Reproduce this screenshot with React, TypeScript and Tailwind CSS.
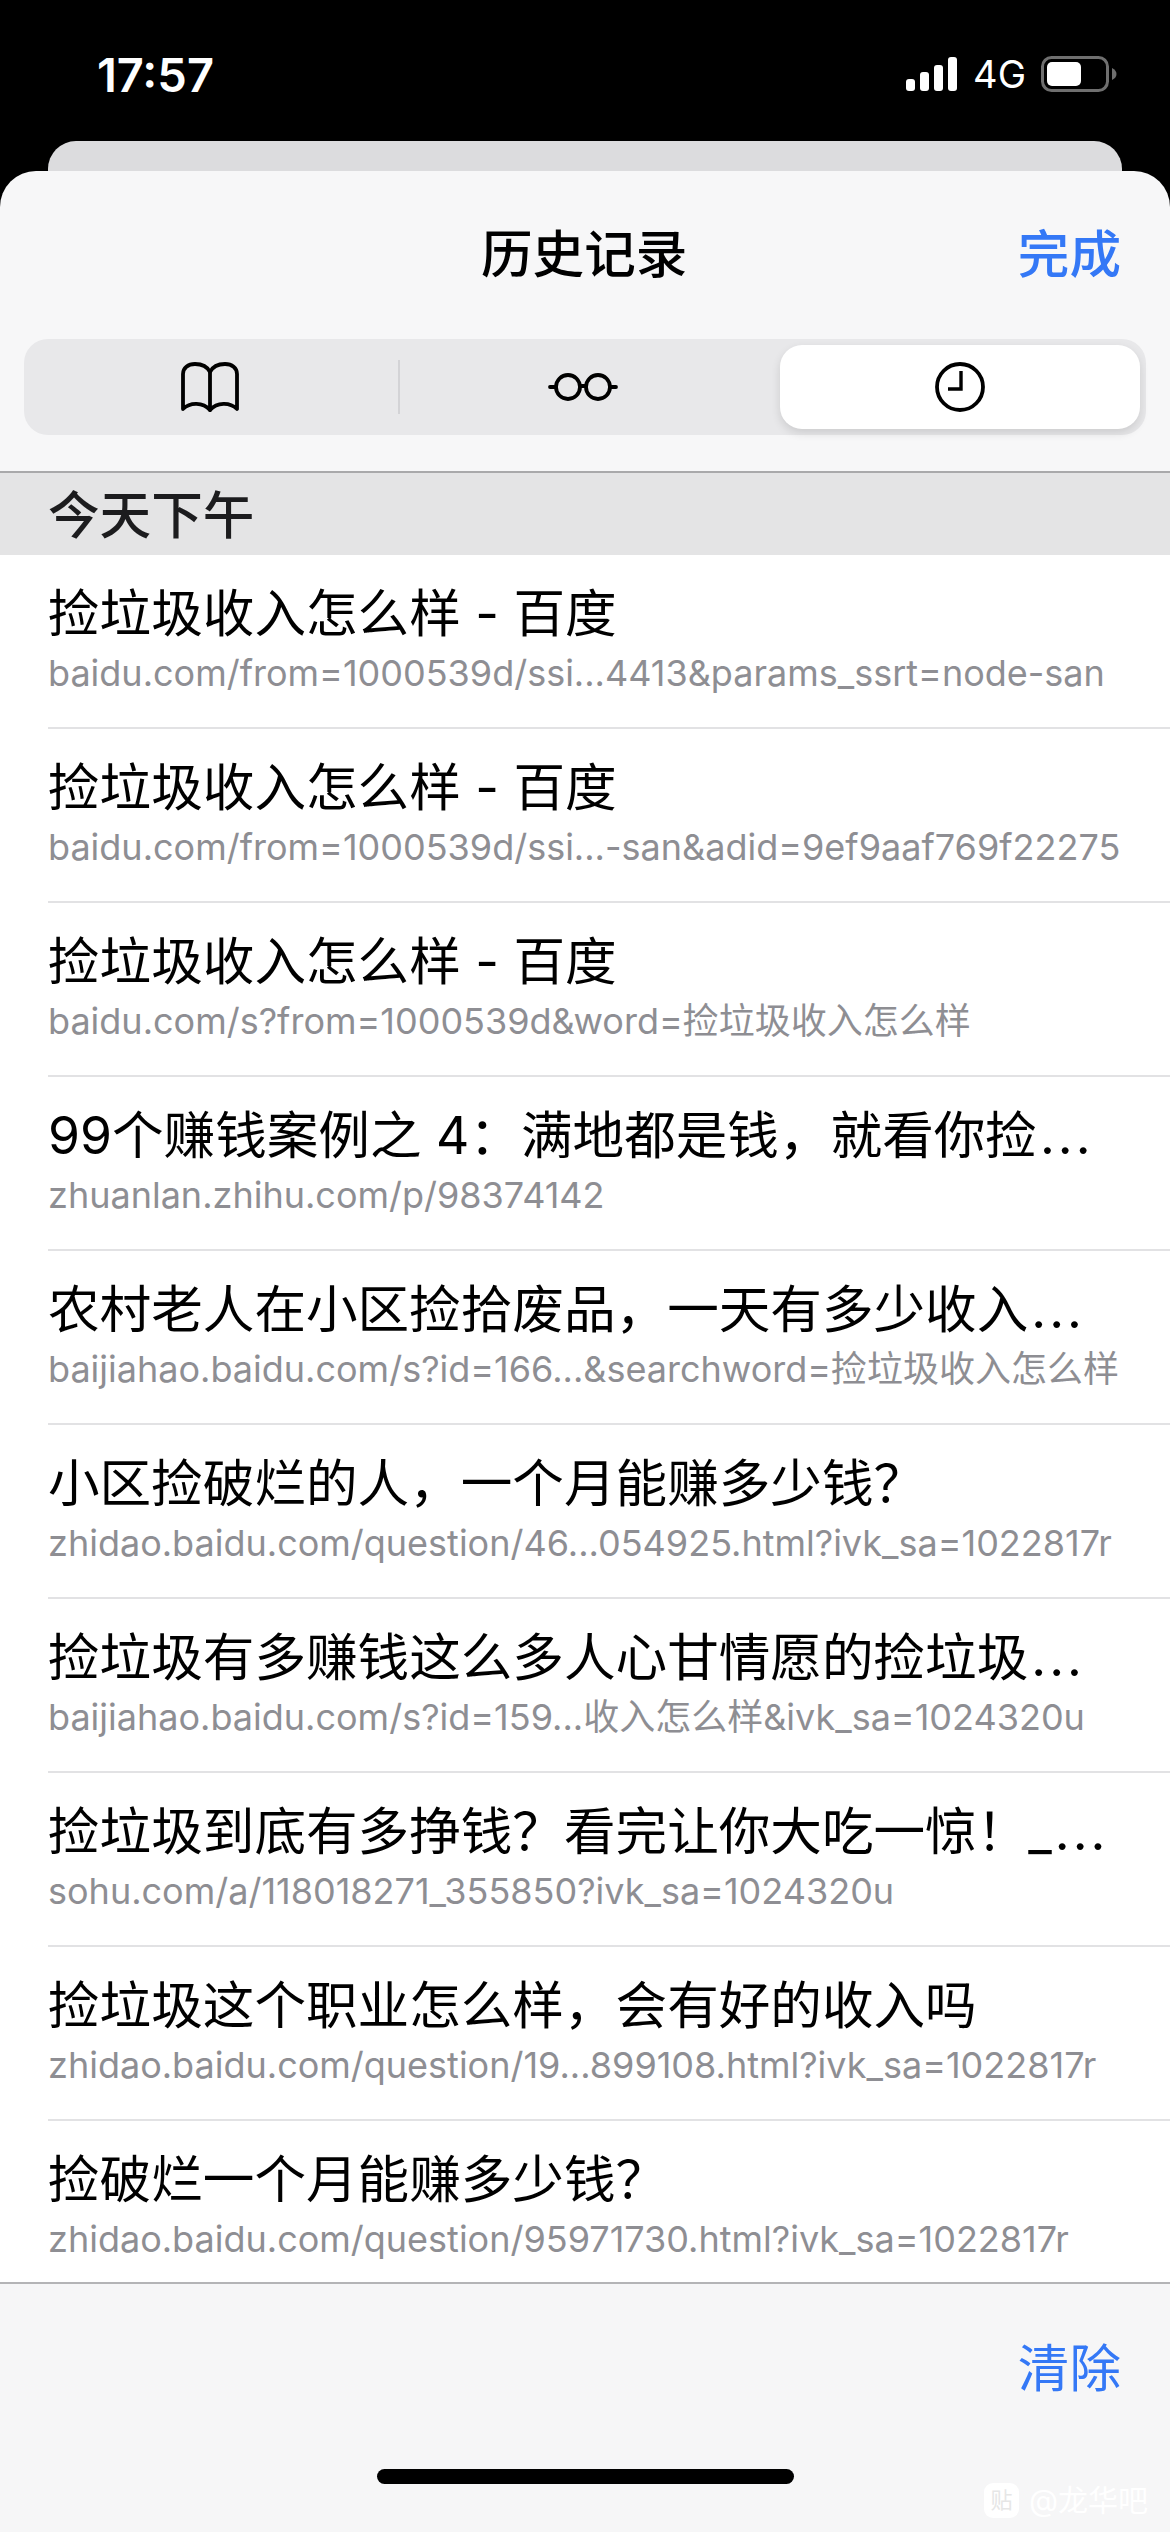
import React from 'react';

const font = { fontFamily: 'Inter, "Noto Sans CJK SC", sans-serif' };

const rows = [
  { title: '捡垃圾收入怎么样 - 百度', url: 'baidu.com/from=1000539d/ssi...4413&params_ssrt=node-san' },
  { title: '捡垃圾收入怎么样 - 百度', url: 'baidu.com/from=1000539d/ssi...-san&adid=9ef9aaf769f22275' },
  { title: '捡垃圾收入怎么样 - 百度', url: 'baidu.com/s?from=1000539d&word=捡垃圾收入怎么样' },
  { title: '99个赚钱案例之 4：满地都是钱，就看你捡', more: true, url: 'zhuanlan.zhihu.com/p/98374142' },
  { title: '农村老人在小区捡拾废品，一天有多少收入', more: true, url: 'baijiahao.baidu.com/s?id=166...&searchword=捡垃圾收入怎么样' },
  { title: '小区捡破烂的人，一个月能赚多少钱？', url: 'zhidao.baidu.com/question/46...054925.html?ivk_sa=1022817r' },
  { title: '捡垃圾有多赚钱这么多人心甘情愿的捡垃圾', more: true, url: 'baijiahao.baidu.com/s?id=159...收入怎么样&ivk_sa=1024320u' },
  { title: '捡垃圾到底有多挣钱？看完让你大吃一惊！_', more: true, url: 'sohu.com/a/118018271_355850?ivk_sa=1024320u' },
  { title: '捡垃圾这个职业怎么样，会有好的收入吗', url: 'zhidao.baidu.com/question/19...899108.html?ivk_sa=1022817r' },
  { title: '捡破烂一个月能赚多少钱？', url: 'zhidao.baidu.com/question/95971730.html?ivk_sa=1022817r' },
];

function SignalIcon() {
  return (
    <svg width="52" height="34" viewBox="0 0 52 34" fill="white">
      <rect x="0" y="22" width="9" height="12" rx="3" />
      <rect x="14" y="15" width="9" height="19" rx="3" />
      <rect x="28" y="8" width="9" height="26" rx="3" />
      <rect x="42" y="0" width="9" height="34" rx="3" />
    </svg>
  );
}

function BatteryIcon() {
  return (
    <svg width="76" height="36" viewBox="0 0 76 36">
      <rect x="1.5" y="1.5" width="65" height="33" rx="9" fill="none" stroke="#6f6f6f" strokeWidth="3" />
      <rect x="6" y="6" width="34" height="24" rx="5" fill="white" />
      <path d="M71 12 C74 13.5 75.5 15.5 75.5 18 C75.5 20.5 74 22.5 71 24 Z" fill="#6f6f6f" />
    </svg>
  );
}

function BookIcon() {
  return (
    <svg width="58" height="50" viewBox="0 0 58 50" fill="none" stroke="black" strokeWidth="3.8" strokeLinejoin="round" strokeLinecap="round">
      <path d="M29 10 C26 4 20 2 14 2 C7 2 2 6 2 12 V47 C9 40 22 40 29 48 C36 40 49 40 56 47 V12 C56 6 51 2 44 2 C38 2 32 4 29 10 Z" />
      <path d="M29 10 V48" />
    </svg>
  );
}

function GlassesIcon() {
  return (
    <svg width="72" height="28" viewBox="0 0 72 28" fill="none" stroke="black" strokeWidth="3.8" strokeLinecap="round">
      <ellipse cx="21" cy="14" rx="12" ry="12" />
      <ellipse cx="51" cy="14" rx="12" ry="12" />
      <path d="M33 13 H39" />
      <path d="M3 14 H9" />
      <path d="M63 14 H69" />
    </svg>
  );
}

function ClockIcon() {
  return (
    <svg width="50" height="50" viewBox="0 0 50 50" fill="none" stroke="black">
      <circle cx="25" cy="25" r="23" strokeWidth="3.8" />
      <path d="M26 9 V27 H13" strokeWidth="3.4" />
    </svg>
  );
}

function HistoryRow({ title, url, more }: { title: string; url: string; more?: boolean }) {
  return (
    <div className="pl-[48px] shrink-0">
      <div className="h-[174px] pt-[24px] border-b-2 border-[#e2e2e4] whitespace-nowrap">
        <div className="text-[51.6px] leading-[68px] text-black">
          {title}
          {more && <span className="tracking-[3px] pl-[3px]">...</span>}
        </div>
        <div className="text-[36px] leading-[44px] mt-[4px] text-[#8e8e93]">{url}</div>
      </div>
    </div>
  );
}

export default function App() {
  return (
    <div className="w-[1170px] h-[2532px] bg-black flex flex-col overflow-hidden relative" style={font}>
      <div className="h-[141px] shrink-0 flex items-start justify-between pl-[97px] pr-[53px] pt-[49px]">
        <span className="text-[47px] leading-[52px] font-semibold text-white">17:57</span>
        <div className="flex items-center gap-[15px] pt-[7px]">
          <SignalIcon />
          <span className="text-[38px] leading-[36px] text-white">4G</span>
          <BatteryIcon />
        </div>
      </div>
      <div className="h-[30px] shrink-0 mx-[48px] bg-[#dcdcde] rounded-t-[28px]" />
      <div className="flex-1 min-h-0 bg-[#f7f7f8] rounded-t-[36px] flex flex-col">
        <div className="h-[168px] shrink-0 flex items-center justify-between pl-[481px] pr-[49px]">
          <span className="text-[51.6px] font-medium text-black">历史记录</span>
          <span className="text-[51.6px] font-medium text-[#3478f6]">完成</span>
        </div>
        <div className="h-[96px] shrink-0 mx-[24px] bg-[#e8e8ea] rounded-[24px] flex items-center p-[6px]">
          <div className="w-[370px] flex items-center justify-center border-r-2 border-[#d3d3d6] h-[54px] pr-[8px]">
            <BookIcon />
          </div>
          <div className="w-[380px] flex items-center justify-center pr-[14px]">
            <GlassesIcon />
          </div>
          <div className="flex-1 h-[84px] bg-white rounded-[22px] shadow-[0_4px_10px_rgba(0,0,0,0.12)] flex items-center justify-center">
            <ClockIcon />
          </div>
        </div>
        <div className="h-[36px] shrink-0" />
        <div className="h-[84px] shrink-0 border-t-2 border-[#a9a9ab] bg-[#e4e4e5] pl-[48px] pt-[4px] flex items-center">
          <span className="text-[51.6px] font-medium text-[#1c1c1e]">今天下午</span>
        </div>
        <div className="h-[1727px] shrink-0 bg-white overflow-hidden flex flex-col">
          {rows.map((row, i) => (
            <HistoryRow key={i} title={row.title} url={row.url} more={row.more} />
          ))}
        </div>
        <div className="flex-1 min-h-0 border-t-2 border-[#b4b4b6] bg-[#f6f6f7] flex flex-col items-center">
          <div className="w-full flex justify-end pr-[49px] pt-[46px]">
            <span className="text-[51.6px] text-[#3478f6]">清除</span>
          </div>
          <div className="mt-[62px] w-[417px] h-[15px] rounded-full bg-black" />
        </div>
      </div>
      {/* watermark over the footer */}
      <div className="absolute left-[984px] top-[2482px] flex items-center gap-[10px]">
        <div className="w-[35px] h-[35px] rounded-[9px] bg-white flex items-center justify-center text-[22px] leading-none text-[#e6e6e6]">贴</div>
        <span className="text-[30px] leading-[36px] text-white">@龙华吧</span>
      </div>
    </div>
  );
}
